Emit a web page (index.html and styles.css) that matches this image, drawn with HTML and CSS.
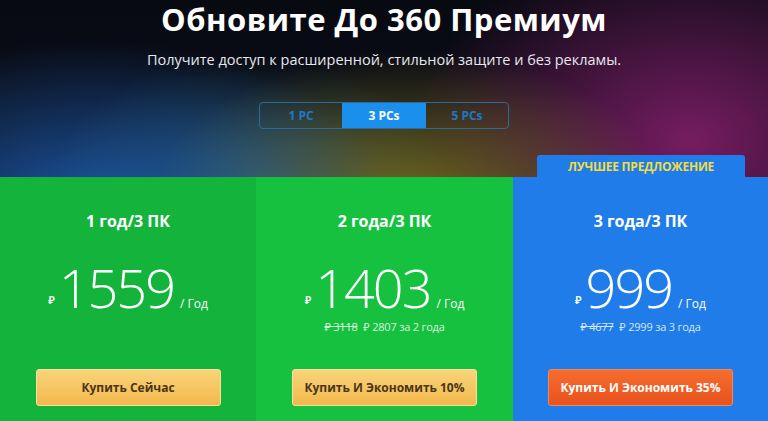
FILE: index.html
```html
<!DOCTYPE html>
<html lang="ru">
<head>
<meta charset="utf-8">
<title>360 Премиум</title>
<link rel="stylesheet" href="styles.css">
</head>
<body>
<div class="page">
  <header class="hero">
    <h1 class="title">Обновите До 360 Премиум</h1>
    <p class="subtitle">Получите доступ к расширенной, стильной защите и без рекламы.</p>
    <div class="tabs">
      <span class="tab">1 PC</span>
      <span class="tab active">3 PCs</span>
      <span class="tab">5 PCs</span>
    </div>
  </header>
  <section class="plans">
    <div class="card card-1">
      <div class="plan-title">1 год/3 ПК</div>
      <div class="price"><span class="cur">₽</span><span class="amount">1559</span><span class="per">/ Год</span></div>
      <div class="note"></div>
      <button class="btn btn-gold">Купить Сейчас</button>
    </div>
    <div class="card card-2">
      <div class="plan-title">2 года/3 ПК</div>
      <div class="price"><span class="cur">₽</span><span class="amount">1403</span><span class="per">/ Год</span></div>
      <div class="note"><s>₽ 3118</s> <span>₽ 2807 за 2 года</span></div>
      <button class="btn btn-gold">Купить И Экономить 10%</button>
    </div>
    <div class="card card-3">
      <div class="badge">ЛУЧШЕЕ ПРЕДЛОЖЕНИЕ</div>
      <div class="plan-title">3 года/3 ПК</div>
      <div class="price"><span class="cur">₽</span><span class="amount">999</span><span class="per">/ Год</span></div>
      <div class="note"><s>₽ 4677</s> <span>₽ 2999 за 3 года</span></div>
      <button class="btn btn-orange">Купить И Экономить 35%</button>
    </div>
  </section>
</div>
</body>
</html>
```

FILE: styles.css
```css
* { box-sizing: border-box; }
html, body { margin: 0; padding: 0; }
body {
  width: 768px;
  height: 421px;
  overflow: hidden;
  font-family: "Open Sans", "Noto Sans", sans-serif;
  background: #0b0e1a;
}
.page {
  width: 768px;
  height: 421px;
  display: flex;
  flex-direction: column;
  background:
    radial-gradient(ellipse 300px 170px at 90px 210px, rgba(30, 95, 180, 0.9), rgba(30, 95, 180, 0) 100%),
    radial-gradient(ellipse 260px 160px at 410px 210px, rgba(130, 120, 32, 0.9), rgba(130, 120, 32, 0) 100%),
    radial-gradient(ellipse 280px 200px at 690px 140px, rgba(130, 30, 105, 0.9), rgba(130, 30, 105, 0) 100%),
    radial-gradient(ellipse 200px 130px at 250px 185px, rgba(45, 100, 115, 0.7), rgba(45, 100, 115, 0) 100%),
    linear-gradient(180deg, #080a12 0%, #0d1120 100%);
}
.hero {
  height: 177px;
  display: flex;
  flex-direction: column;
  align-items: center;
  flex: none;
}
.title {
  margin: -1px 0 0;
  font-size: 31px;
  line-height: 40px;
  font-weight: 700;
  color: #fff;
  letter-spacing: 0.5px;
}
.subtitle {
  margin: 11px 0 0;
  font-size: 14.5px;
  line-height: 20px;
  color: #e6e8ee;
}
.tabs {
  margin-top: 32px;
  display: flex;
  width: 250px;
  height: 27px;
  border: 1px solid #2d6a96;
  border-radius: 4px;
  overflow: hidden;
}
.tab {
  flex: 1 1 0;
  display: flex;
  align-items: center;
  justify-content: center;
  font-size: 12px;
  font-weight: 700;
  color: #1f78c4;
}
.tab.active {
  flex: 0 0 84px;
  background: #1a8fec;
  color: #fff;
}
.plans {
  flex: 1;
  display: grid;
  grid-template-columns: 256px 257px 1fr;
}
.card {
  position: relative;
  display: flex;
  flex-direction: column;
  align-items: center;
  padding-top: 33px;
}
.card-1 { background: #14b33c; }
.card-2 { background: #17c140; }
.card-3 { background: #1f7ce9; }
.badge {
  position: absolute;
  top: -22px;
  left: 24px;
  width: 208px;
  height: 23px;
  background: #1f7ce9;
  border-radius: 3px 3px 0 0;
  color: #f2dc3e;
  font-size: 12px;
  font-weight: 700;
  display: flex;
  align-items: center;
  justify-content: center;
  letter-spacing: -0.2px;
}
.plan-title {
  font-size: 16px;
  line-height: 22px;
  font-weight: 700;
  color: #fff;
}
.price {
  margin-top: 27px;
  display: flex;
  align-items: baseline;
  color: #fff;
  height: 56px;
}
.cur {
  font-size: 11px;
  line-height: 14px;
  font-weight: 600;
  margin-right: 4px;
  transform: translateY(-4px);
}
.amount {
  font-size: 54px;
  line-height: 56px;
  font-weight: 300;
  letter-spacing: -2px;
}
.per {
  font-size: 12px;
  line-height: 14px;
  margin-left: 6px;
}
.note {
  margin-top: 3px;
  height: 18px;
  font-size: 11px;
  line-height: 18px;
  color: #d6f3dc;
  letter-spacing: -0.2px;
}
.card-3 .note { color: #d5e6fb; }
.note s { margin-right: 3px; }
.btn {
  margin-top: 33px;
  width: 185px;
  height: 37px;
  border-radius: 3px;
  font-family: "Open Sans", "Noto Sans", sans-serif;
  font-size: 12px;
  font-weight: 700;
  cursor: pointer;
}
.btn-gold {
  border: 1px solid #f9e0a0;
  background: linear-gradient(180deg, #f9d47a 0%, #f2b84c 100%);
  color: #4a3418;
}
.btn-orange {
  border: 1px solid #f08a5a;
  background: linear-gradient(180deg, #f76d2e 0%, #e8521d 100%);
  color: #fff;
}
```
